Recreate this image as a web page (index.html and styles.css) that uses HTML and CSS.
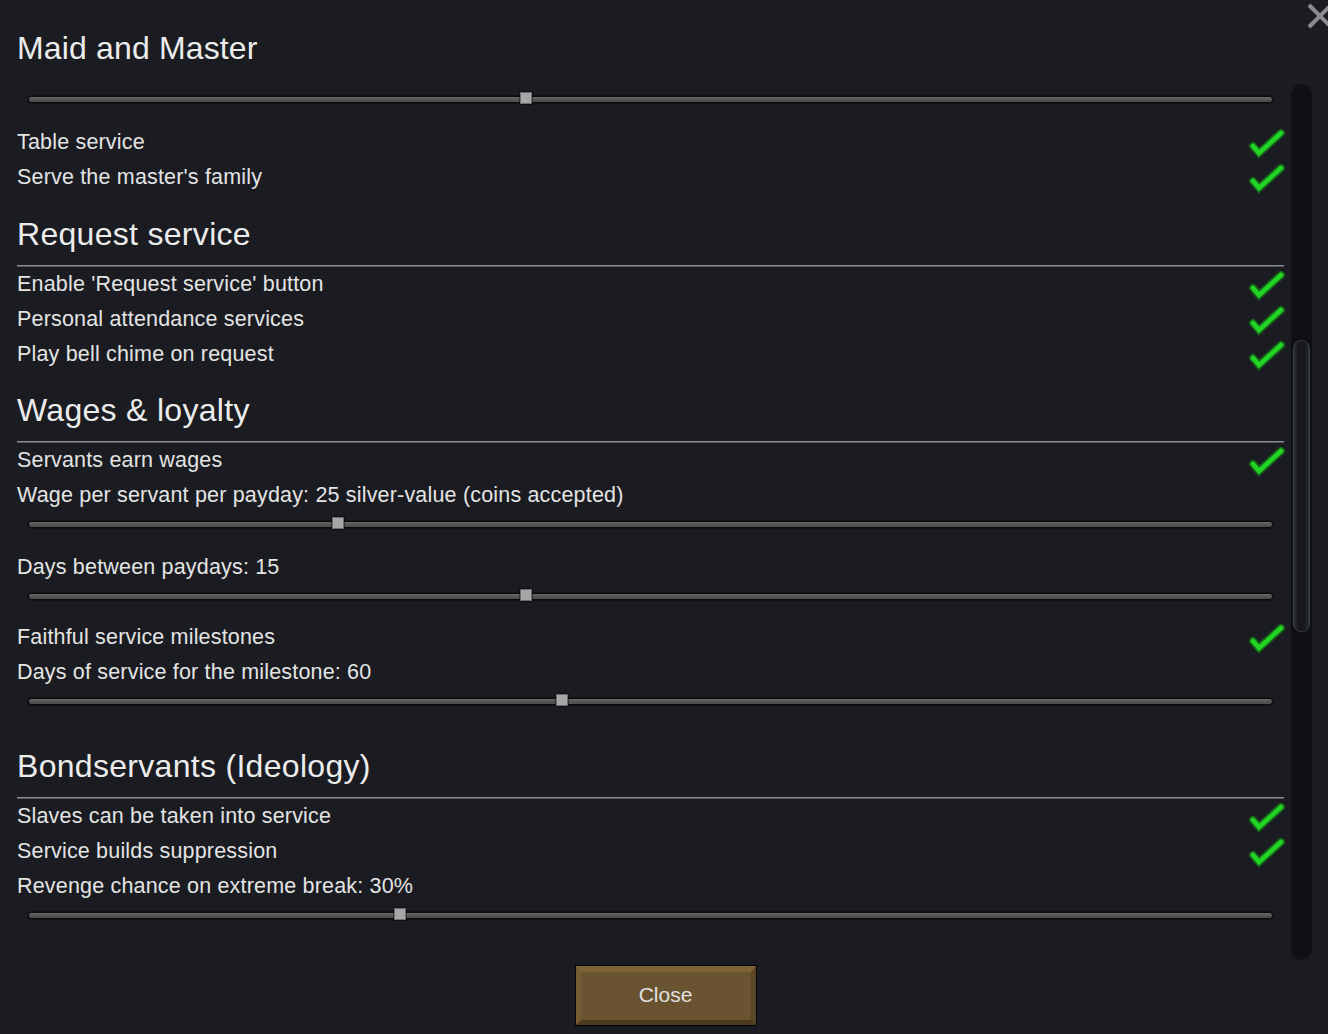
FILE: index.html
```html
<!DOCTYPE html>
<html>
<head>
<meta charset="utf-8">
<link rel="stylesheet" href="styles.css">
</head>
<body>
<svg class="close-x" width="28" height="28" viewBox="0 0 28 28"><path d="M3 3 L25 25 M25 3 L3 25" stroke="#8a8c8e" stroke-width="4" fill="none"/></svg>
<div class="main">
  <div class="content">
    <div class="title">Maid and Master</div>
    <div class="slider s-first"><div class="track"></div><div class="thumb" style="left: 40%"></div></div>

    <div class="row r-first"><span>Table service</span><svg class="check" viewBox="0 0 36 32"><polyline points="4,19 10,26 32,6"/><polyline class="in" points="4,19 10,26 32,6"/></svg></div>
    <div class="row"><span>Serve the master's family</span><svg class="check" viewBox="0 0 36 32"><polyline points="4,19 10,26 32,6"/><polyline class="in" points="4,19 10,26 32,6"/></svg></div>

    <div class="heading h-request">Request service</div>
    <div class="rule"></div>
    <div class="row"><span>Enable 'Request service' button</span><svg class="check" viewBox="0 0 36 32"><polyline points="4,19 10,26 32,6"/><polyline class="in" points="4,19 10,26 32,6"/></svg></div>
    <div class="row"><span>Personal attendance services</span><svg class="check" viewBox="0 0 36 32"><polyline points="4,19 10,26 32,6"/><polyline class="in" points="4,19 10,26 32,6"/></svg></div>
    <div class="row"><span>Play bell chime on request</span><svg class="check" viewBox="0 0 36 32"><polyline points="4,19 10,26 32,6"/><polyline class="in" points="4,19 10,26 32,6"/></svg></div>

    <div class="heading h-wages">Wages &amp; loyalty</div>
    <div class="rule"></div>
    <div class="row"><span>Servants earn wages</span><svg class="check" viewBox="0 0 36 32"><polyline points="4,19 10,26 32,6"/><polyline class="in" points="4,19 10,26 32,6"/></svg></div>
    <div class="row"><span>Wage per servant per payday: 25 silver-value (coins accepted)</span></div>
    <div class="slider"><div class="track"></div><div class="thumb" style="left: 24.9%"></div></div>
    <div class="row r-after-slider"><span>Days between paydays: 15</span></div>
    <div class="slider"><div class="track"></div><div class="thumb" style="left: 40%"></div></div>
    <div class="row r-after-slider2"><span>Faithful service milestones</span><svg class="check" viewBox="0 0 36 32"><polyline points="4,19 10,26 32,6"/><polyline class="in" points="4,19 10,26 32,6"/></svg></div>
    <div class="row"><span>Days of service for the milestone: 60</span></div>
    <div class="slider"><div class="track"></div><div class="thumb" style="left: 42.9%"></div></div>

    <div class="heading h-bond">Bondservants (Ideology)</div>
    <div class="rule"></div>
    <div class="row"><span>Slaves can be taken into service</span><svg class="check" viewBox="0 0 36 32"><polyline points="4,19 10,26 32,6"/><polyline class="in" points="4,19 10,26 32,6"/></svg></div>
    <div class="row"><span>Service builds suppression</span><svg class="check" viewBox="0 0 36 32"><polyline points="4,19 10,26 32,6"/><polyline class="in" points="4,19 10,26 32,6"/></svg></div>
    <div class="row"><span>Revenge chance on extreme break: 30%</span></div>
    <div class="slider"><div class="track"></div><div class="thumb" style="left: 29.9%"></div></div>
  </div>
  <div class="scroll"><div class="scroll-thumb"></div></div>
</div>
<div class="footer">
  <div class="btn">Close</div>
</div>
</body>
</html>
```

FILE: styles.css
```css
html, body {
  margin: 0;
  padding: 0;
}
body {
  width: 1328px;
  height: 1034px;
  overflow: hidden;
  position: relative;
  background: #1a1c21;
  font-family: "Liberation Sans", Arial, sans-serif;
  color: #e4e4e4;
}
.close-x {
  position: absolute;
  left: 1306px;
  top: 2px;
}
.main {
  display: flex;
  height: 966px;
  padding-left: 17px;
}
.content {
  width: 1267px;
  padding-top: 28px;
  display: flex;
  flex-direction: column;
}
.title {
  font-size: 32px;
  line-height: 40px;
  height: 40px;
  letter-spacing: 0.15px;
  color: #ececec;
}
.heading {
  font-size: 32px;
  line-height: 40px;
  height: 40px;
  margin-top: 20px;
  letter-spacing: 0.3px;
  color: #ececec;
}
.heading.h-request {
  margin-top: 19px;
}
.heading.h-wages {
  margin-top: 18px;
}
.heading.h-bond {
  margin-top: 34px;
}
.rule {
  height: 1px;
  margin-top: 11px;
  background: #8c8d8f;
  border-bottom: 1px solid #55575a;
}
.row {
  height: 35px;
  line-height: 35px;
  font-size: 21.5px;
  letter-spacing: 0.18px;
  display: flex;
  justify-content: space-between;
  align-items: center;
  white-space: nowrap;
}
.row span {
  line-height: 35px;
}
.r-first {
  margin-top: 15px;
}
.r-after-slider {
  margin-top: 15px;
}
.r-after-slider2 {
  margin-top: 13px;
}
.check {
  width: 36px;
  height: 32px;
  margin-right: -1px;
  flex: none;
}
.check polyline {
  fill: none;
  stroke: #17661a;
  stroke-width: 8;
  stroke-linejoin: miter;
  stroke-linecap: round;
}
.check polyline.in {
  stroke: #22d524;
  stroke-width: 4.5;
}
.slider {
  position: relative;
  height: 22px;
  margin: 0 11px;
  display: flex;
  align-items: center;
}
.slider.s-first {
  margin-top: 20px;
}
.track {
  flex: 1;
  height: 5px;
  border: 1px solid #0a0b0d;
  border-radius: 4px;
  background: linear-gradient(#6a6a6a, #575757 40%, #4c4c4c);
  box-shadow: 0 0 0 1px rgba(0, 0, 0, 0.35);
}
.thumb {
  position: absolute;
  top: 4px;
  width: 12px;
  height: 12px;
  margin-left: -6px;
  background: #a6a7a8;
  border: 1px solid #6c6d6f;
  box-sizing: border-box;
  box-shadow: 0 0 0 1px rgba(0, 0, 0, 0.4);
}
.scroll {
  width: 21px;
  height: 876px;
  margin-top: 84px;
  margin-left: 7px;
  background: #0e1013;
  border-radius: 11px;
  box-sizing: border-box;
  padding-top: 256px;
  display: flex;
  justify-content: center;
}
.scroll-thumb {
  width: 17px;
  height: 292px;
  box-sizing: border-box;
  border: 1px solid #3a3d41;
  border-radius: 8px;
  background: linear-gradient(90deg, #2c2f33, #16181b 30%, #16181b 70%, #2a2d31);
}
.footer {
  display: flex;
  justify-content: center;
  padding-left: 3px;
}
.btn {
  width: 180px;
  height: 59px;
  box-sizing: border-box;
  border-top: 6px solid #7e6336;
  border-left: 5px solid #765c33;
  border-right: 5px solid #5a4527;
  border-bottom: 5px solid #4c3a1f;
  background: #6a5330;
  box-shadow: 0 0 0 1px #050505;
  color: #e0e0e0;
  font-size: 21px;
  display: flex;
  align-items: center;
  justify-content: center;
  padding-bottom: 2px;
}
```
